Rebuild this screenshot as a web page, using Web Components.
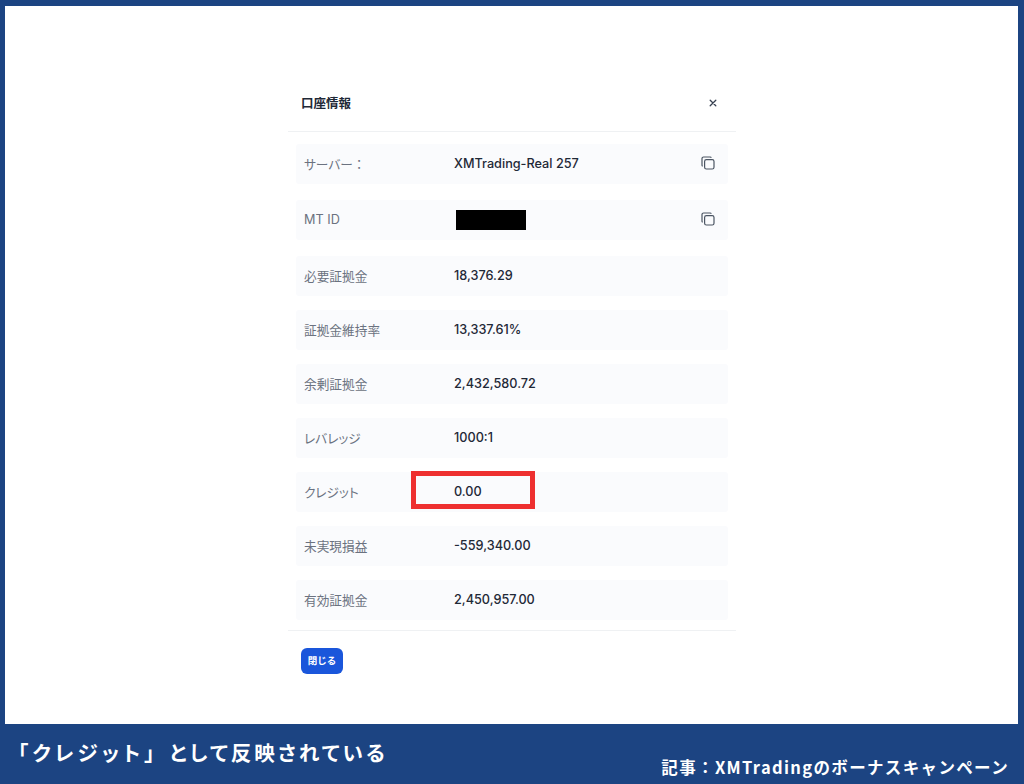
<!DOCTYPE html>
<html lang="ja">
<head>
<meta charset="utf-8">
<title>口座情報</title>
<style>
    html, body { margin: 0; padding: 0; }
    body {
        width: 1024px;
        height: 784px;
        overflow: hidden;
        background: #1c4482;
        font-family: Inter, "Noto Sans CJK JP", sans-serif;
    }
    .quoted { letter-spacing: 4px; margin-right: 11px; }
</style>
</head>
<body>
<article-shot>
    <account-dialog heading="口座情報">
        <info-row label="サーバー：" copy>XMTrading-Real 257</info-row>
        <info-row label="MT ID" copy><redact-bar></redact-bar></info-row>
        <info-row label="必要証拠金">18,376.29</info-row>
        <info-row label="証拠金維持率">13,337.61%</info-row>
        <info-row label="余剰証拠金">2,432,580.72</info-row>
        <info-row label="レバレッジ">1000:1</info-row>
        <info-row label="クレジット" marked>0.00</info-row>
        <info-row label="未実現損益">-559,340.00</info-row>
        <info-row label="有効証拠金">2,450,957.00</info-row>
    </account-dialog>
    <span slot="caption"><span class="quoted">「クレジット」</span>として反映されている</span>
    <span slot="source">記事：XMTradingのボーナスキャンペーン</span>
</article-shot>

<script>
class ArticleShot extends HTMLElement {
    constructor() {
        super();
        const shadow = this.attachShadow({ mode: 'open' });
        shadow.innerHTML = `
            <style>
                :host {
                    display: flex;
                    flex-direction: column;
                    width: 1024px;
                    height: 784px;
                }
                .panel {
                    height: 718px;
                    margin: 6px 6px 0 5px;
                    background: #fff;
                    display: flex;
                    justify-content: center;
                    padding-top: 69px;
                    box-sizing: border-box;
                }
                .bar {
                    flex: 1;
                    display: flex;
                    justify-content: space-between;
                    color: #fff;
                    font-family: "Noto Sans CJK JP", sans-serif;
                    font-weight: 700;
                    padding: 0 15px 0 18px;
                }
                .caption {
                    font-size: 20.5px;
                    font-feature-settings: "palt";
                    letter-spacing: 3px;
                    line-height: 28px;
                    margin-top: 14px;
                }
                .source {
                    font-size: 16.5px;
                    letter-spacing: 1.35px;
                    line-height: 24px;
                    margin-top: 31px;
                    white-space: nowrap;
                }
            </style>
            <div class="panel"><slot></slot></div>
            <div class="bar">
                <div class="caption"><slot name="caption"></slot></div>
                <div class="source"><slot name="source"></slot></div>
            </div>
        `;
    }
}

class AccountDialog extends HTMLElement {
    constructor() {
        super();
        const shadow = this.attachShadow({ mode: 'open' });
        shadow.innerHTML = `
            <style>
                :host {
                    display: block;
                    width: 448px;
                    margin-left: 1px;
                }
                header {
                    height: 54px;
                    display: flex;
                    align-items: center;
                    justify-content: space-between;
                    padding: 0 19px 2px 13px;
                    border-bottom: 1px solid #eff1f3;
                    font-size: 12.5px;
                    font-weight: 700;
                    color: #1f2937;
                }
                header svg { display: block; margin-top: 2px; }
                .rows {
                    display: flex;
                    flex-direction: column;
                    padding: 12px 8px 10px;
                    border-bottom: 1px solid #eff1f3;
                }
                footer { padding: 17px 13px; }
                button {
                    display: block;
                    width: 42px;
                    height: 26px;
                    padding: 0 0 2px;
                    border: none;
                    border-radius: 6px;
                    background: #1a56db;
                    color: #fff;
                    font: 700 9.5px Inter, "Noto Sans CJK JP", sans-serif;
                }
            </style>
            <header>
                <span id="title"></span>
                <svg width="8" height="8" viewBox="0 0 8 8" fill="none" stroke="#374151" stroke-width="1.3" stroke-linecap="round">
                    <path d="M1.2 1.2l5.6 5.6M6.8 1.2l-5.6 5.6"/>
                </svg>
            </header>
            <div class="rows"><slot></slot></div>
            <footer><button>閉じる</button></footer>
        `;
        shadow.getElementById('title').textContent = this.getAttribute('heading');
    }
}

class InfoRow extends HTMLElement {
    constructor() {
        super();
        const shadow = this.attachShadow({ mode: 'open' });
        shadow.innerHTML = `
            <style>
                :host {
                    display: flex;
                    align-items: center;
                    position: relative;
                    height: 40px;
                    box-sizing: border-box;
                    margin-bottom: 14px;
                    padding: 0 12px 2px 8px;
                    background: #fafbfd;
                    border-radius: 3px;
                    font-size: 12.7px;
                }
                :host(:nth-of-type(-n+2)) { margin-bottom: 16px; }
                :host(:last-of-type) { margin-bottom: 0; }
                .label {
                    width: 150px;
                    color: #6b7280;
                    font-feature-settings: "palt";
                }
                .label span { font-feature-settings: normal; }
                .value {
                    flex: 1;
                    color: #1f2937;
                    font-weight: 500;
                    display: flex;
                    align-items: center;
                }
                svg { display: block; }
                .mark {
                    position: absolute;
                    left: 115px;
                    top: -1px;
                    width: 124px;
                    height: 38px;
                    box-sizing: border-box;
                    border: 5px solid #ee3030;
                }
            </style>
            <div class="label"></div>
            <div class="value"><slot></slot></div>
        `;
        if (this.hasAttribute('copy')) {
            shadow.innerHTML += `
                <svg width="16" height="16" viewBox="0 0 16 16" fill="none" stroke="#4b5563" stroke-width="1.2">
                    <rect x="4.6" y="4.6" width="9.4" height="9.4" rx="1.8"/>
                    <path d="M11.4 2.6A1.6 1.6 0 0 0 10 2H3.6A1.6 1.6 0 0 0 2 3.6V10a1.6 1.6 0 0 0 .6 1.4"/>
                </svg>
            `;
        }
        // the full-width colon keeps its own box, the kana around it are tightened
        shadow.querySelector('.label').innerHTML = this.getAttribute('label').replace('：', '<span>：</span>');
        if (this.hasAttribute('marked')) {
            const mark = document.createElement('div');
            mark.className = 'mark';
            shadow.appendChild(mark);
        }
    }
}

class RedactBar extends HTMLElement {
    constructor() {
        super();
        const shadow = this.attachShadow({ mode: 'open' });
        shadow.innerHTML = `
            <style>
                :host {
                    display: block;
                    width: 70px;
                    height: 20px;
                    margin: 2px 0 0 2px;
                    background: #000;
                }
            </style>
        `;
    }
}

customElements.define('article-shot', ArticleShot);
customElements.define('account-dialog', AccountDialog);
customElements.define('info-row', InfoRow);
customElements.define('redact-bar', RedactBar);
</script>
</body>
</html>
